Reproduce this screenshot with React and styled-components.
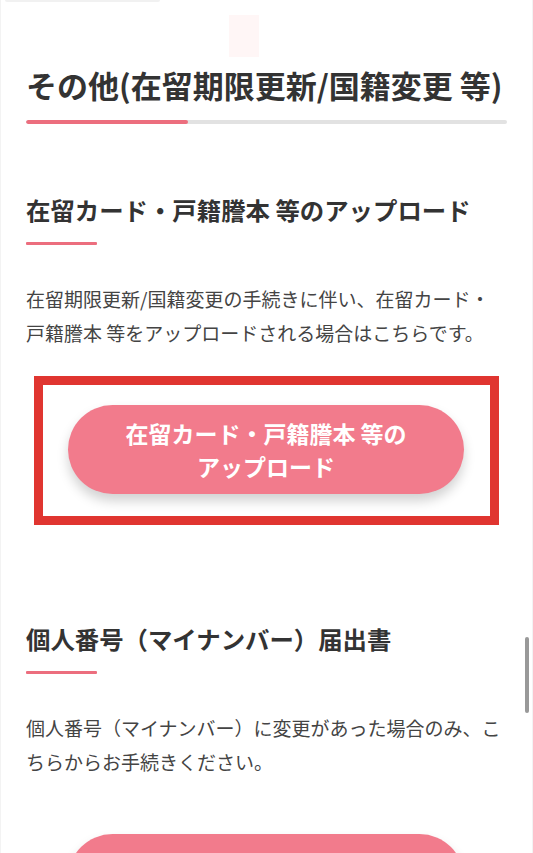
import React from "react";
import styled, { createGlobalStyle } from "styled-components";

const GlobalStyle = createGlobalStyle`
  html, body {
    margin: 0;
    padding: 0;
    background: #f3f3f3;
  }
  body {
    font-family: "Noto Sans CJK JP", "Noto Sans", sans-serif;
    color: #333;
  }
`;

const Page = styled.div`
  position: relative;
  margin: 0 1px;
  height: 853px;
  background: #fff;
  padding: 0 25px;
  box-sizing: border-box;
  overflow: hidden;
`;

const TopStub = styled.div`
  width: 155px;
  height: 2px;
  margin-left: -21px;
  background: #f1f1f1;
  border-radius: 0 0 2px 2px;
`;

const Ornament = styled.div`
  width: 30px;
  height: 42px;
  margin: 13px 0 0 203px;
  background: #fff6f6;
`;

const PageTitle = styled.h1`
  margin: 6px 0 0;
  font-size: 31px;
  line-height: 43px;
  font-weight: 700;
  color: #333;
  white-space: nowrap;
`;

const TitleBar = styled.div`
  display: flex;
  width: 481px;
  height: 4px;
  margin-top: 14px;
  border-radius: 2px;
  background: #e2e2e2;
  overflow: hidden;
`;

const TitleBarFill = styled.div`
  width: 162px;
  background: #ec6e7e;
  border-radius: 2px;
`;

const Section = styled.section`
  margin-top: ${({ $gap }) => $gap}px;
`;

const Heading = styled.h2`
  margin: 0;
  font-size: 24.4px;
  line-height: 36px;
  font-weight: 700;
  color: #333;
  white-space: nowrap;
`;

const HeadingLine = styled.div`
  width: 71px;
  height: 3px;
  margin-top: 14px;
  background: #ec6e7e;
  border-radius: 1px;
`;

const Text = styled.p`
  margin: 37px 0 0;
  font-size: 19px;
  line-height: 33.5px;
  color: #444;
  white-space: nowrap;
`;

const ButtonWrap = styled.div`
  position: relative;
  width: 396px;
  margin: 56px 0 0 42px;
`;

const Highlight = styled.div`
  position: absolute;
  top: -29px;
  left: -34px;
  right: -35px;
  bottom: -31px;
  border: 9px solid #e03530;
  pointer-events: none;
`;

const PillButton = styled.button`
  display: flex;
  align-items: center;
  justify-content: center;
  width: 396px;
  height: 89px;
  padding: 0 20px;
  border: none;
  border-radius: 45px;
  background: #f27b8c;
  color: #fff;
  font-family: "Noto Sans CJK JP", "Noto Sans", sans-serif;
  font-size: 23px;
  line-height: 33px;
  font-weight: 700;
  text-align: center;
  box-shadow: 0 7px 12px rgba(0, 0, 0, 0.18);
  cursor: pointer;
`;

const ScrollThumb = styled.div`
  position: absolute;
  top: 637px;
  right: 3px;
  width: 4px;
  height: 76px;
  border-radius: 2px;
  background: #999;
`;

const App = () => {
  return (
    <>
      <GlobalStyle />
      <Page>
        <TopStub />
        <Ornament />
        <PageTitle>その他(在留期限更新/国籍変更 等)</PageTitle>
        <TitleBar>
          <TitleBarFill />
        </TitleBar>

        <Section $gap={68}>
          <Heading>在留カード・戸籍謄本 等のアップロード</Heading>
          <HeadingLine />
          <Text>
            在留期限更新/国籍変更の手続きに伴い、在留カード・
            <br />
            戸籍謄本 等をアップロードされる場合はこちらです。
          </Text>
          <ButtonWrap>
            <PillButton>
              在留カード・戸籍謄本 等の
              <br />
              アップロード
            </PillButton>
            <Highlight />
          </ButtonWrap>
        </Section>

        <Section $gap={127}>
          <Heading>個人番号（マイナンバー）届出書</Heading>
          <HeadingLine />
          <Text>
            個人番号（マイナンバー）に変更があった場合のみ、こ
            <br />
            ちらからお手続きください。
          </Text>
          <ButtonWrap>
            <PillButton>個人番号（マイナンバー）届出書</PillButton>
          </ButtonWrap>
        </Section>

        <ScrollThumb />
      </Page>
    </>
  );
};

export default App;
